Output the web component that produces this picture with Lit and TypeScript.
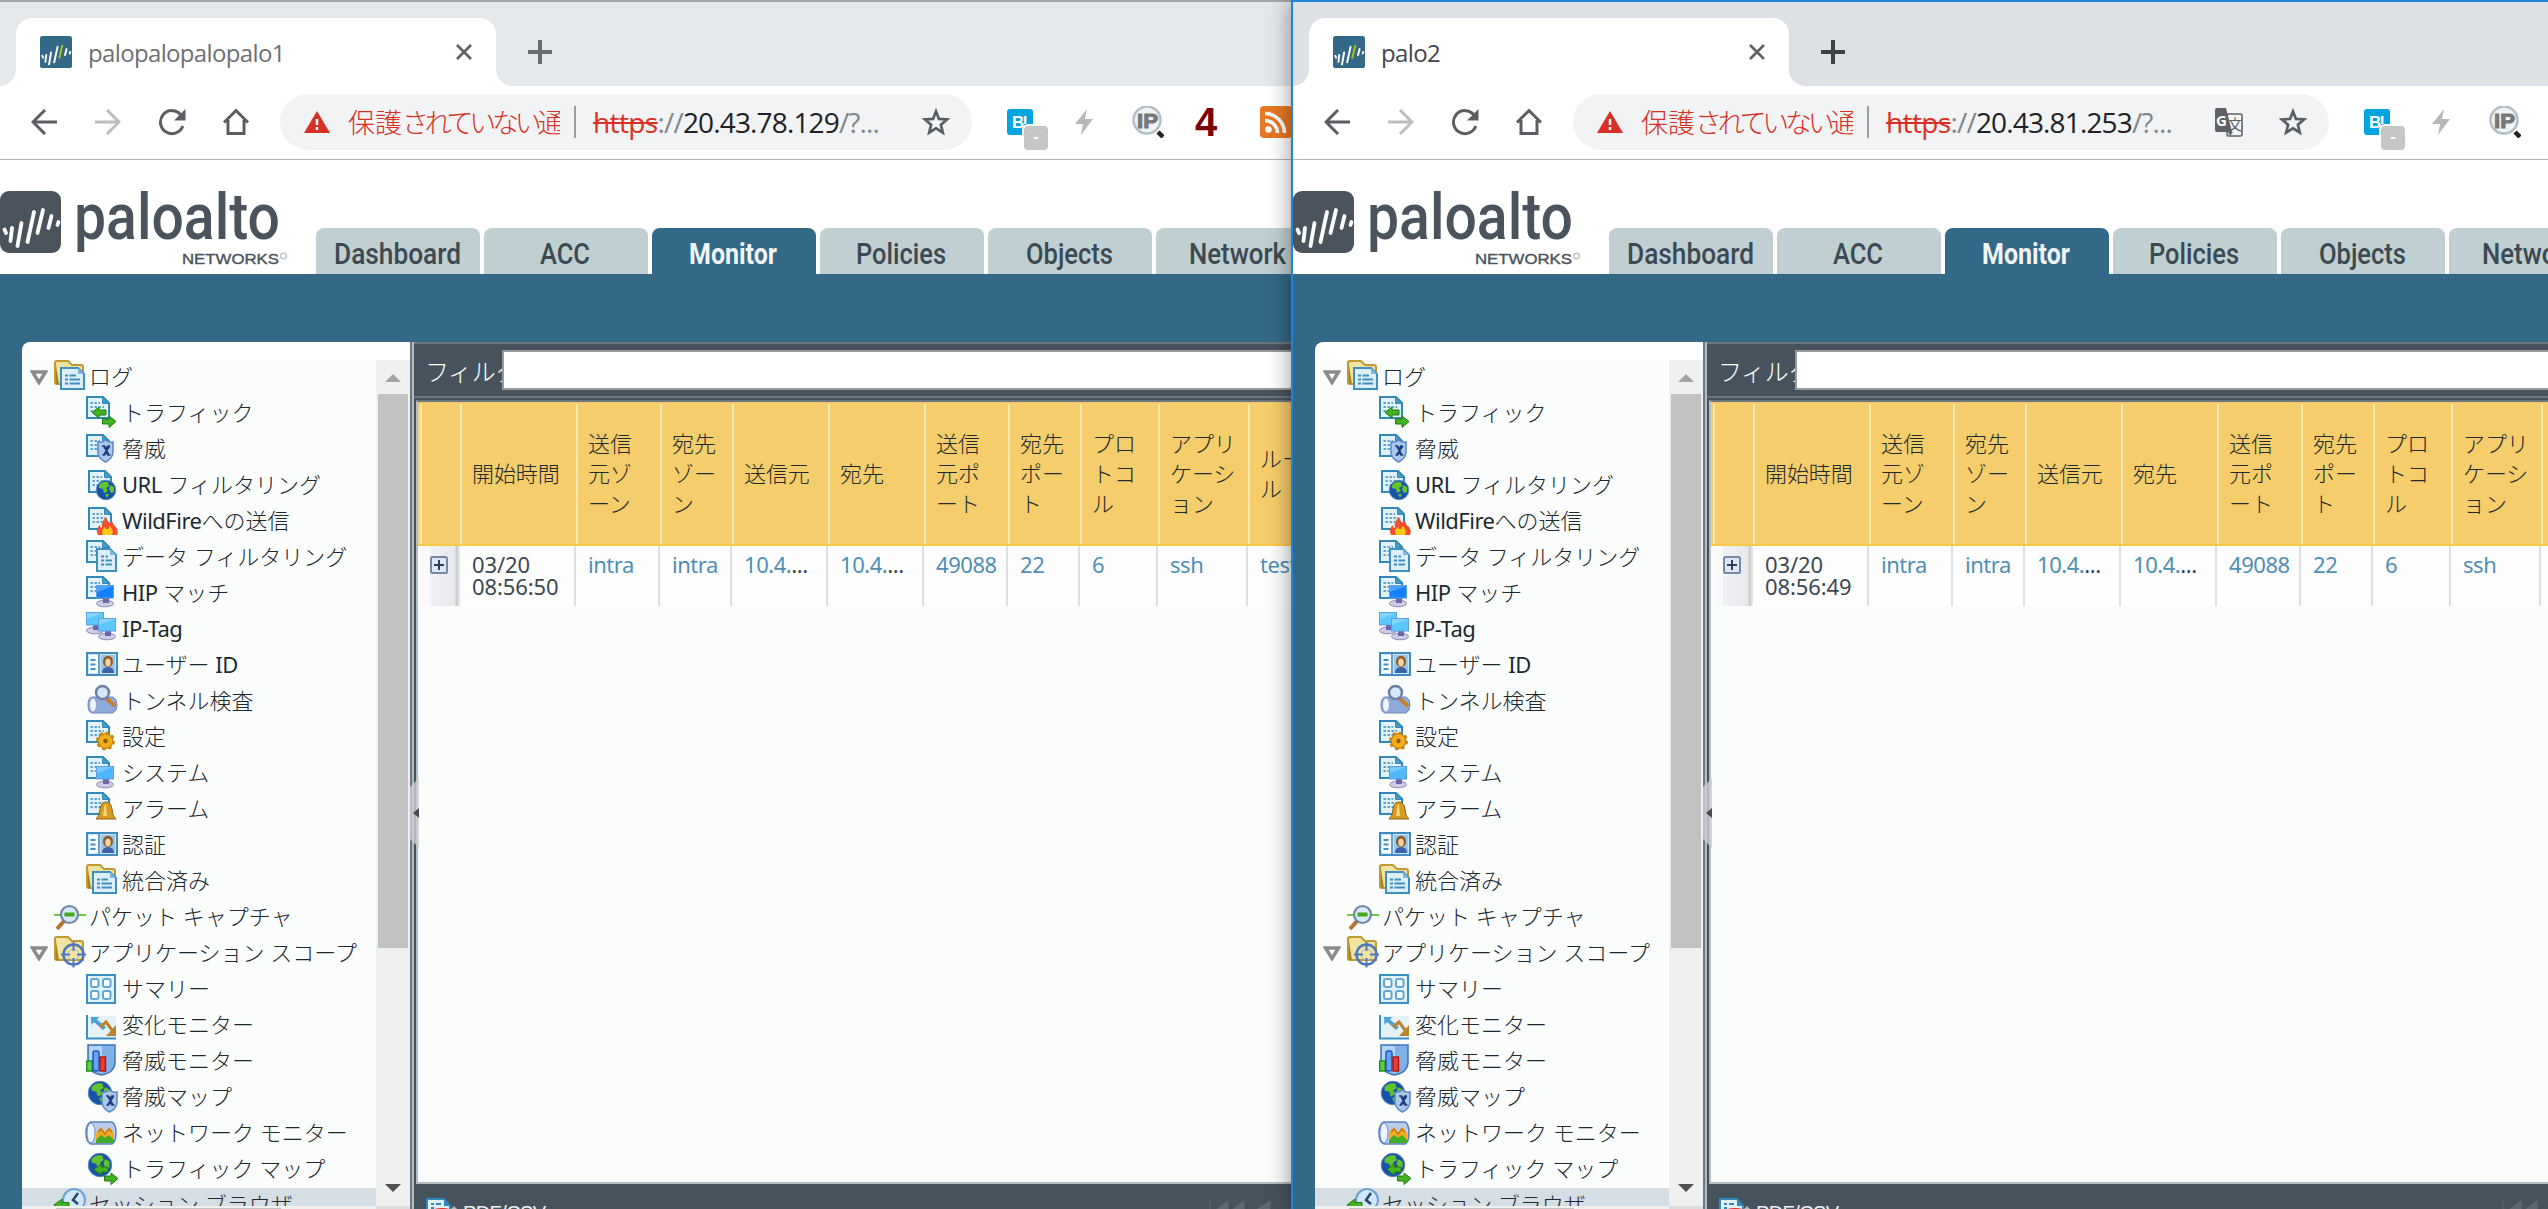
import { LitElement, html, svg, css, nothing } from "lit";
import { customElement, property } from "lit/decorators.js";

/* ---------- icon fragments, all on a 32 unit grid ---------- */

const doc = (x = 0, y = 0) => svg`<g transform="translate(${x} ${y})">
  <path d="M1 1H17L23 7V22H1Z" fill="#e3f1f9" stroke="#3388ba" stroke-width="2"/>
  <path d="M16.5 1V7.5H23Z" fill="#4d9cc8" stroke="#3388ba" stroke-width="1"/>
  <path d="M4.5 7H14M4.5 11H18M4.5 15H18" stroke="#5ba3cb" stroke-width="1.8" stroke-dasharray="2.4 1.6"/></g>`;

const sheet = (x: number, y: number, w: number, h: number) => svg`<g transform="translate(${x} ${y})">
  <path d="M1 1H${w - 7}L${w - 1} 7V${h - 1}H1Z" fill="#dceefa" stroke="#3f8fc0" stroke-width="2"/>
  <path d="M${w - 7} 1V7H${w - 1}Z" fill="#7db8dc"/>
  <path d="M5 8.500h3M5 12.500h3M5 16.500h3M9.500 8.500H${w - 9}M9.500 12.500H${w - 5}M9.500 16.500H${w - 5}" stroke="#3f8fc0" stroke-width="1.8"/></g>`;

const folder = svg`<path d="M1 3Q1 1 3 1H14L18 5H27Q29 5 29 7V24H3Q1 24 1 22Z" fill="#f1e3a0" stroke="#bd9a33" stroke-width="2"/>
  <path d="M2 5L5 24H2Z" fill="#a98427"/>`;

const globe = (x: number, y: number, r: number) => svg`<g transform="translate(${x} ${y}) scale(${r / 10})">
  <circle r="9.800" fill="#1552a8" stroke="#5c86bd" stroke-width=".8"/>
  <path d="M-7-5Q-4-9 2-8L3-4L0-2L2 1L-2 3L-3-1L-7-2ZM4-5L8-3L8 2L5 3L3-1ZM-1 4L3 4L1 8Z" fill="#64c32d"/></g>`;

const arrows = (x: number, y: number) => svg`<g transform="translate(${x} ${y})" fill="#41b324" stroke="#24790f" stroke-width="1">
  <path d="M0 5.500L7 0V3H14V8H7V11Z"/><path d="M24 14.500L17 9V12H10.500V17H17V20.500Z"/></g>`;

const shield = (x: number, y: number) => svg`<g transform="translate(${x} ${y})">
  <path d="M1 2Q5 3 8.500 0Q12 3 16 2V13Q15 19 8.500 22Q2 19 1 13Z" fill="#a9c8ec" stroke="#5c86c4" stroke-width="1.500"/>
  <path d="M5 6h2.500l1.500 3 2-3h2M5.500 15h2l1.500-3 2 3h2.500M7 6.500L12 15M12.500 6.500L6.500 15" fill="none" stroke="#1c3f80" stroke-width="1.700"/></g>`;

const monitor = (x: number, y: number, c: string) => svg`<g transform="translate(${x} ${y})">
  <ellipse cx="9" cy="18.500" rx="8.500" ry="3.300" fill="#cfcde6" stroke="#8b87b6" stroke-width="1"/>
  <path d="M7 12h6v6H7z" fill="#6d66ad"/>
  <rect x=".5" y=".5" width="17" height="12.500" fill="${c}" stroke="#5d9fe0"/>
  <path d="M1 1H17L1 7Z" fill="#fff" opacity=".25"/></g>`;

const card = svg`<rect x="1" y="5" width="30" height="22" fill="#cfe4f3" stroke="#3e8cc2" stroke-width="2"/>
  <rect x="3" y="7" width="9" height="18" fill="#f7fbfe"/><path d="M13 6V26" stroke="#3e8cc2" stroke-width="1.500"/>
  <path d="M4.500 12h5M4.500 16.500h5M4.500 21h5" stroke="#4490c4" stroke-width="2"/>
  <rect x="15" y="7" width="14" height="18" fill="#9cc6e3"/>
  <path d="M16 25Q16 19 22 19T28 25Z" fill="#3c62ad"/><ellipse cx="22" cy="13.500" rx="5" ry="5.800" fill="#8b5a25"/>
  <ellipse cx="22" cy="14.500" rx="2.700" ry="4" fill="#f5d3a8"/>`;

const ICONS: Record<string, unknown> = {
  log: svg`${folder}${sheet(6, 7, 25, 23)}`,
  traffic: svg`${doc()}${arrows(6, 11)}`,
  threat: svg`${doc(0, 2)}${shield(11, 8)}`,
  url: svg`${doc(2, 2)}${globe(20, 22, 10)}`,
  wildfire: svg`${doc(2, 3)}<path d="M12 31Q9 25 14 21Q14 24 16 24Q15 18 20 13Q21 17 24 19L26 17Q27 21 30 23Q33 27 31 31Z" fill="#f0502c"/>
    <path d="M17 31Q14 27 19 23Q20 26 22 25L24 22Q28 27 26 31Z" fill="#ffc914"/>`,
  data: svg`${doc()}${sheet(10, 8, 21, 24)}`,
  hip: svg`${doc()}${monitor(10, 9, "#1280ff")}`,
  iptag: svg`${monitor(0, 0, "#5cc8ff")}${monitor(12, 6, "#5cc8ff")}`,
  card,
  tunnel: svg`<path d="M6 13H27Q31 15 31 21T27 29H6Q2 28 2 21T6 13Z" fill="#8eaadb" stroke="#6d89bd"/>
    <ellipse cx="7" cy="21" rx="3.500" ry="7" fill="#f0f5fc" stroke="#8ba4cf"/>
    <path d="M20 14L29 22" stroke="#c77d2f" stroke-width="4"/><circle cx="16.500" cy="8.500" r="6.500" fill="#d4e8f5" stroke="#6c7fa6" stroke-width="2.500"/>`,
  config: svg`${doc()}<circle cx="19.500" cy="21" r="7.500" fill="#f3ae1b" stroke="#a66e0c"/>
    <circle cx="19.500" cy="21" r="8" fill="none" stroke="#c9860f" stroke-width="3" stroke-dasharray="3.200 3.080"/><circle cx="19.500" cy="21" r="2.200" fill="#8a5a08"/>`,
  system: svg`${doc()}${monitor(10, 10, "#4fb8fb")}`,
  alarm: svg`${doc()}<path d="M10 27Q14 24 14 17Q15 10 20 10T26 17Q26 24 30 27Z" fill="#d99a20" stroke="#8e6212"/>
    <path d="M17 24Q18 19 18 15Q19 12 20 12L21 24Z" fill="#f7d777"/>`,
  packet: svg`<path d="M0 15H32" stroke="#6bc648" stroke-width="2"/><path d="M3 29L10 21" stroke="#b5742b" stroke-width="4"/>
    <circle cx="15.500" cy="14.500" r="8.500" fill="#d6e9f5" stroke="#7284a8" stroke-width="2.200"/><path d="M10.500 14.500H20.500" stroke="#46a81f" stroke-width="4"/>`,
  scope: svg`${folder}<g fill="none" stroke="#4e78bd"><circle cx="19.500" cy="18.500" r="10" stroke-width="2.500"/><circle cx="19.500" cy="18.500" r="5.500" stroke="#9db7dd" stroke-width="1"/>
    <path d="M19.500 6V15M19.500 22V31.500M7 18.500H16M23 18.500H32" stroke-width="2"/></g>`,
  summary: svg`<rect x="1" y="3" width="28" height="28" fill="#dff0f9" stroke="#3b8fc4" stroke-width="2"/>
    <g fill="#fff" stroke="#62a7d2" stroke-width="2"><rect x="5" y="7" width="7.500" height="8" rx="2"/><rect x="17" y="7" width="7.500" height="8" rx="2"/><rect x="5" y="19" width="7.500" height="8" rx="2"/><rect x="17" y="19" width="7.500" height="8" rx="2"/></g>`,
  change: svg`<rect x="1" y="8" width="29" height="23" fill="#e4f1f9"/><path d="M1 7V30.500H30" fill="none" stroke="#3b8fc4" stroke-width="2"/>
    <path d="M5 9H13L11 11.500L20 19L17 22L8 14L5.500 17Z" fill="#4aa0d8"/>
    <path d="M14 19L20 14L26 22" fill="none" stroke="#bb842c" stroke-width="3"/><path d="M30 17V28H20Z" fill="#bb842c"/>`,
  tmon: svg`<path d="M2 1H29V19Q28 29 15.500 31Q3 29 2 19Z" fill="#7fb1e6" stroke="#3f74b8" stroke-width="1.500"/><path d="M3 2H16V29Q4 27 3 19Z" fill="#b5d3f2"/>
    <rect x=".7" y="17" width="5.500" height="10" fill="#5fd04a" stroke="#208a1c" stroke-width="1.400"/><rect x="7" y="7" width="6" height="20" rx="2" fill="#63a5f5" stroke="#1d53b8" stroke-width="1.400"/><rect x="14" y="13" width="5.500" height="14" fill="#ef3b34" stroke="#ab1410" stroke-width="1.400"/>`,
  tmap: svg`${globe(14, 13, 12)}${shield(15, 10)}`,
  netmon: svg`<path d="M5 6H26Q30 8 30 17T26 28H5Q0 26 0 17T5 6Z" fill="#b9cdea" stroke="#5a7fb8" stroke-width="1.500"/><ellipse cx="5" cy="17" rx="4" ry="10" fill="#edf4fc" stroke="#6d8ec2"/>
    <path d="M10 25V17L15 11L19 16L23 11L28 17V25Z" fill="#f6a723"/><path d="M12 16L15 13L19 18L23 13L26 16" fill="none" stroke="#b9720c" stroke-width="1.200"/><path d="M10 27V24L15 19L19 22L23 19L28 24V27Z" fill="#3fae26"/>`,
  trmap: svg`${globe(14, 13, 12)}${arrows(8, 12)}`,
  session: svg`<circle cx="20" cy="12" r="11" fill="#cfe7f8" stroke="#6aa2d4" stroke-width="2"/><path d="M24 5L19 12L24 16" fill="none" stroke="#26466b" stroke-width="2.500"/>
    <path d="M0 17L8 11V14.500H15V20H8V24Z" fill="#41b324" stroke="#24790f"/>`,
  export: svg`<path d="M1 1H18L24 8V24H1Z" fill="#e3f1f9" stroke="#3388ba" stroke-width="2"/><path d="M18 1V8H24Z" fill="#3388ba"/><path d="M5 6h3M10 6h5M5 10h3" stroke="#3388ba" stroke-width="2"/>
    <path d="M8 11Q16 9 24 11V20H8Z" fill="#d9302c"/><path d="M28 8L33 13H23Z" fill="#b9b9b9"/>`,
};

const icon = (name: string) => html`<svg class="ico" viewBox="0 0 32 32" overflow="visible">${ICONS[name]}</svg>`;

const bars = (lime: string) => svg`<g fill="none" stroke="#fff" stroke-width="3.800" stroke-linecap="round">
  <path d="M4.500 38.500L6 42"/><path d="M12 37L10.500 50"/><path d="M21.500 32L17.500 55"/><path d="M34 21L27.500 51"/>
  <path d="M43 19L37.500 42" stroke="${lime}"/><path d="M51.500 25L48.500 37"/><path d="M58.500 31L57.500 34"/></g>`;

/** A line of text set to an exact width inside its own box. */
const fitted = (label: string, w: number, h: number, baseline: number, cls: string) =>
  html`<svg class=${cls} width=${w} height=${h} viewBox="0 0 ${w} ${h}" overflow="visible"><text x="-1" y=${baseline} textLength=${w} lengthAdjust="spacingAndGlyphs">${label}</text></svg>`;

/** Latin runs carry a heavier weight than the light kana and kanji around them. */
const mixed = (label: string) =>
  label.split(/([A-Za-z-]+)/).filter(Boolean).map((part) => (/^[A-Za-z-]+$/.test(part) ? html`<b>${part}</b>` : part));

const TREE: Array<[number, string, string]> = [
  [0, "log", "ログ"], [1, "traffic", "トラフィック"], [1, "threat", "脅威"], [1, "url", "URL フィルタリング"],
  [1, "wildfire", "WildFireへの送信"], [1, "data", "データ フィルタリング"], [1, "hip", "HIP マッチ"], [1, "iptag", "IP-Tag"],
  [1, "card", "ユーザー ID"], [1, "tunnel", "トンネル検査"], [1, "config", "設定"], [1, "system", "システム"],
  [1, "alarm", "アラーム"], [1, "card", "認証"], [1, "log", "統合済み"], [2, "packet", "パケット キャプチャ"],
  [0, "scope", "アプリケーション スコープ"], [1, "summary", "サマリー"], [1, "change", "変化モニター"], [1, "tmon", "脅威モニター"],
  [1, "tmap", "脅威マップ"], [1, "netmon", "ネットワーク モニター"], [1, "trmap", "トラフィック マップ"], [2, "session", "セッション ブラウザ"],
];

const NAV: Array<[string, number]> = [["Dashboard", 127], ["ACC", 50], ["Monitor", 88], ["Policies", 90], ["Objects", 87], ["Network", 97], ["Device", 80]];

const HEADS: string[][] = [[], ["開始時間"], ["送信", "元ゾ", "ーン"], ["宛先", "ゾー", "ン"], ["送信元"], ["宛先"], ["送信", "元ポ", "ート"],
  ["宛先", "ポー", "ト"], ["プロ", "トコ", "ル"], ["アプリ", "ケーシ", "ョン"], ["ルー", "ル"]];

@customElement("browser-window")
export class BrowserWindow extends LitElement {
  @property() heading = "";
  @property() host = "";
  @property() time = "";
  @property({ type: Boolean }) translate2 = false;
  @property({ type: Boolean, reflect: true }) active = false;

  static styles = css`
    :host { display: flex; flex-direction: column; height: 1209px; overflow: hidden; box-sizing: border-box; background: #fff;
      border-top: 2px solid #a6a6a6; min-width: 0; font-family: "Noto Sans", "Noto Sans CJK JP", sans-serif; --strip: #e4e8eb; --title: #6c7074; --plus: #696b6e; }
    :host([active]) { border-top-color: #1f83d8; border-left: 2px solid #1f83d8; --strip: #dde0e5; --title: #43474d; --plus: #3e4247; }
    * { box-sizing: border-box; }
    svg { display: block; flex: none; }
    .strip { flex: none; height: 84px; background: var(--strip); display: flex; align-items: flex-end; }
    .curve { width: 16px; height: 16px; flex: none; background: radial-gradient(circle at 0 0, transparent 15.500px, #fff 16px); }
    .curve.r { background: radial-gradient(circle at 100% 0, transparent 15.500px, #fff 16px); }
    .tab { width: 480px; height: 68px; background: #fff; border-radius: 16px 16px 0 0; display: flex; align-items: center; padding: 0 24px; }
    .title { flex: 1; margin-left: 16px; font: 24px "Open Sans", sans-serif; letter-spacing: -.65px; color: var(--title); white-space: nowrap; }
    .plus { margin: 0 0 22px 16px; }
    .bar { flex: none; height: 74px; border-bottom: 1px solid #b3b3b5; display: flex; align-items: center; padding: 0 0 1px 12px; }
    .slot { width: 64px; flex: none; display: flex; justify-content: center; position: relative; }
    .omni { width: 692px; height: 56px; flex: none; border-radius: 28px; background: #f1f3f4; margin: 0 16px 0 12px; display: flex; align-items: center; padding: 0 22px 0 24px; }
    .omni.wide { width: 756px; }
    .warn { width: 212px; margin-left: 18px; overflow: hidden; white-space: nowrap; color: #d93025; font: 300 27px "Noto Sans CJK JP", sans-serif; line-height: 40px; }
    .warn i { font-style: normal; letter-spacing: -4.300px; }
    .sep { width: 2px; height: 32px; background: #9b9ea2; margin: 0 17px 0 14px; flex: none; }
    .addr { flex: 1; white-space: nowrap; font: 28px "Open Sans", sans-serif; letter-spacing: -.850px; color: #80868b; line-height: 40px; }
    .addr s { color: #d93025; text-decoration-thickness: 2px; letter-spacing: -.6px; }
    .addr b { font-weight: 400; color: #202124; }
    .tr { margin-right: 36px; }
    .badge { position: absolute; left: 36px; top: 17px; width: 24px; height: 24px; border-radius: 4px; background: #c6c6c6; color: #fff; box-shadow: 0 0 0 2px #fff;
      font: bold 16px/22px "Liberation Sans", sans-serif; text-align: center; }
    .four { font: bold 40px/40px "Liberation Sans", sans-serif; color: #7d0000; margin-right: 12px; }
    .brand { flex: none; height: 114px; display: flex; align-items: flex-end; background: #fff; }
    .logo { margin-right: 16px; }
    .nav { display: flex; gap: 4px; }
    .nav div { width: 164px; height: 46px; flex: none; border-radius: 8px 8px 0 0; background: #c0cfd2; display: flex; justify-content: center; align-items: center; }
    .nav .on { background: #336887; }
    .nt { font: 500 30px Roboto, sans-serif; fill: #3b4a52; }
    .on .nt { font-weight: 700; fill: #f0f5f8; }
    .page { flex: 1; min-height: 0; background: #336887; padding: 68px 0 0 22px; display: flex; }
    .side { width: 388px; flex: none; background: #fff; border-radius: 8px 0 0 0; padding-top: 18px; display: flex; flex-direction: column; }
    .scroll { flex: 1; min-height: 0; display: flex; }
    .tree { width: 354px; background: #fbfdfc; overflow: hidden; }
    .row { height: 36px; display: flex; align-items: flex-start; padding-left: 8px; color: #1d282f; }
    .row.l1 { padding-left: 64px; }
    .row.l2 { padding-left: 32px; }
    .row.sel { background: #d4dee4; }
    .ico { width: 32px; height: 32px; }
    .tri { margin: 10px 6px 0 0; }
    .row span { font-size: 22px; line-height: 33px; letter-spacing: 0; margin-left: 4px; white-space: pre; font-weight: 300; }
    .row.l0 span, .row.l2 span { margin-left: 3px; }
    .row b { font-weight: 400; letter-spacing: -.5px; }
    .vbar { width: 34px; background: #f0f0f0; display: flex; flex-direction: column; align-items: center; }
    .up { margin: 14px 0 12px; }
    .thumb { width: 30px; height: 554px; background: #c1c1c1; flex: none; }
    .down { margin-top: 236px; }
    .hbar { height: 3px; background: #f0f0f0; flex: none; display: flex; justify-content: space-between; }
    .hbar p { margin: 2px 0 0 34px; width: 225px; background: #c1c1c1; }
    .hbar q { width: 34px; background: #dcdcdc; quotes: none; }
    .split { width: 4px; flex: none; background: linear-gradient(90deg, #6c7983 50%, #b4bcc2 50%); position: relative; }
    .grip { position: absolute; left: 0; top: 436px; width: 9px; height: 70px; background: #cfced4cc; clip-path: polygon(0 9px, 100% 0, 100% 100%, 0 61px); display: flex; align-items: center; justify-content: flex-end; z-index: 2; }
    .main { flex: 1; min-width: 0; background: #47535c; border-top: 2px solid #6e7780; display: flex; flex-direction: column; }
    .filter { height: 54px; flex: none; display: flex; align-items: center; padding-left: 11px; border-bottom: 2px solid #6e7780; }
    .filter span { width: 77px; overflow: hidden; white-space: nowrap; color: #fff; font-size: 24px; letter-spacing: -.4px; line-height: 38px; font-weight: 300; padding-top: 3px; }
    .filter div { flex: 1; height: 40px; background: #fff; border: 2px solid #999; border-right: 0; }
    .grid { margin: 2px 0 0 2px; flex: none; height: 784px; border: 2px solid #b4bcc2; border-top-color: #6e7780; border-right: 0; background: #fbfdfc; overflow: hidden; }
    .cols { display: grid; grid-template-columns: 40px 116px 84px 72px 96px 96px 84px 72px 78px 90px 90px; width: 918px; }
    .head { height: 144px; background: #f5cd6a; border-bottom: 2px solid #fdca47; padding: 2px 0 0 2px; width: 1200px; color: #1f2a30; font-size: 22px; line-height: 30px; letter-spacing: -.1px; font-weight: 300; }
    .head div { border-left: 2px solid #fde6b0; padding: 0 0 3px 10px; display: flex; flex-direction: column; justify-content: center; white-space: nowrap; }
    .body { height: 60px; padding-left: 2px; background: #fdfdfe; color: #3c4850; font-size: 22px; line-height: 22px; letter-spacing: -.1px; }
    .body div { border-right: 2px solid #dcdfe3; padding: 7px 0 0 12px; white-space: nowrap; }
    .body .a { color: #4e8fb3; letter-spacing: -.45px; }
    .body u { color: #3c4850; text-decoration: none; }
    .body .x { padding: 10px 0 0 10px; background: linear-gradient(90deg, #fafafa 10px, #f1f2f5 10px, #e7e8ec 35px, #c9cacf 36px, #d2d3d7 38px); border-right-color: #e3e3e6; }
    .foot { flex: 1; min-height: 0; display: flex; align-items: flex-start; padding: 14px 0 0 12px; overflow: hidden; }
    .foot span { margin: 2px 0 0 5px; color: #eef1f3; font: 20px/26px "Liberation Sans", sans-serif; letter-spacing: -.6px; }
    .pager { margin: 3px 0 0 663px; opacity: .35; }
    .brandname { font: 500 64px Roboto, sans-serif; fill: #4b545c; }
    .sub { font: 15.500px "Liberation Sans", sans-serif; fill: #4b545c; stroke: #4b545c; stroke-width: .4px; }
    .bl { font: 900 17px "Liberation Sans", sans-serif; fill: #fff; }
    .ip { font: 900 20px "Liberation Sans", sans-serif; fill: #777; stroke: #777; }
    .g { font: 700 15px "Open Sans", sans-serif; fill: #fff; }
    .zh { font: 15px "Noto Sans CJK JP", sans-serif; fill: #5f6368; }
  `;

  private chrome() {
    return html`
      <div class="strip">
        <div class="curve"></div>
        <div class="tab">
          <svg width="32" height="32" viewBox="0 0 62 62"><rect width="62" height="62" rx="5" fill="#336887"/>${bars("#a5c61c")}</svg>
          <div class="title">${this.heading}</div>
          <svg width="16" height="16" viewBox="0 0 16 16"><path d="M1 1L15 15M15 1L1 15" stroke="#5f6368" stroke-width="2.800"/></svg>
        </div>
        <div class="curve r"></div>
        <svg class="plus" width="24" height="24" viewBox="0 0 24 24"><path d="M12 0V24M0 12H24" stroke="var(--plus)" stroke-width="4"/></svg>
      </div>
      <div class="bar">
        <div class="slot"><svg width="26" height="26" viewBox="0 0 26 26"><path d="M26 13H2M14 1L2 13L14 25" fill="none" stroke="#5a5e63" stroke-width="3"/></svg></div>
        <div class="slot"><svg width="26" height="26" viewBox="0 0 26 26"><path d="M0 13H24M12 1L24 13L12 25" fill="none" stroke="#bcbec0" stroke-width="3"/></svg></div>
        <div class="slot"><svg width="28" height="28" viewBox="0 0 28 28"><path d="M23 7A11.500 11.500 0 1 0 24.800 18" fill="none" stroke="#5a5e63" stroke-width="3"/><path d="M27.500 1V12.500H16Z" fill="#5a5e63"/></svg></div>
        <div class="slot"><svg width="28" height="28" viewBox="0 0 28 28"><path d="M2 14.500L14 2.500L26 14.500M6 12V25.500H22V12" fill="none" stroke="#5a5e63" stroke-width="3"/></svg></div>
        <div class="omni ${this.translate2 ? "wide" : ""}">
          <svg width="26" height="22" viewBox="0 0 26 22"><path d="M13 0L26 22H0Z" fill="#d93025"/><path d="M13 8V14M13 16V19" stroke="#fff" stroke-width="2.500"/></svg>
          <div class="warn">保護<i>されていない</i>通信</div>
          <div class="sep"></div>
          <div class="addr"><s>https</s>://<b>${this.host}</b>/?...</div>
          ${this.translate2
            ? html`<svg class="tr" width="28" height="29" viewBox="0 0 28 29"><rect x="12" y="6" width="15" height="22" rx="1.500" fill="#f1f3f4" stroke="#5f6368" stroke-width="1.600"/>
                <text class="zh" x="12.500" y="22">文</text><path d="M2 0H11L17 24H2Q0 24 0 22V2Q0 0 2 0Z" fill="#5f6368"/><path d="M13 24H18L15 28Z" fill="#5f6368"/><text class="g" x="1" y="18">G</text></svg>`
            : nothing}
          <svg width="28" height="28" viewBox="0 0 28 28"><path d="M14 3.500L17 10.900L25 11.500L18.900 16.700L20.800 24.500L14 20.300L7.200 24.500L9.100 16.700L3 11.500L11 10.900Z" fill="none" stroke="#5a5e63" stroke-width="2.700"/></svg>
        </div>
        <div class="slot"><svg width="26" height="26" viewBox="0 0 26 26"><rect width="26" height="26" rx="3" fill="#00a4de"/><text class="bl" x="5" y="19" textLength="16">B!</text></svg><div class="badge">-</div></div>
        <div class="slot"><svg width="18" height="26" viewBox="0 0 18 26"><path d="M12 0L0 15H8L6 26L18 10H10Z" fill="#b7b7b7"/></svg></div>
        <div class="slot"><svg width="32" height="32" viewBox="0 0 32 32"><circle cx="15" cy="14" r="13.500" fill="#eef3f6" stroke="#b3bec6" stroke-width="2.500"/><path d="M26 26L31 31" stroke="#222" stroke-width="4.500"/><text class="ip" x="5" y="21.500" textLength="21" lengthAdjust="spacingAndGlyphs">IP</text></svg></div>
        <div class="slot"><span class="four">4</span></div>
        <div class="slot"><svg width="32" height="32" viewBox="0 0 32 32"><rect width="32" height="32" rx="4" fill="#e77824"/><circle cx="8.500" cy="23.500" r="3.300" fill="#fff"/><path d="M5 14.500A12.500 12.500 0 0 1 17.500 27M5 7.500A19.500 19.500 0 0 1 24.500 27" fill="none" stroke="#fff" stroke-width="3.600"/></svg></div>
      </div>`;
  }

  private tree() {
    return html`<div class="side">
      <div class="scroll">
        <div class="tree">
          ${TREE.map(([lvl, ic, label], i) => html`<div class="row l${lvl} ${i === TREE.length - 1 ? "sel" : ""}">
            ${lvl === 0 ? html`<svg class="tri" width="18" height="16" viewBox="0 0 18 16"><path d="M2.500 2H15.500L9 12.500Z" fill="#fff" stroke="#8b8b8b" stroke-width="3.400"/></svg>` : nothing}
            ${icon(ic)}<span>${mixed(label)}</span></div>`)}
        </div>
        <div class="vbar">
          <svg class="up" width="16" height="8" viewBox="0 0 16 8"><path d="M8 0L16 8H0Z" fill="#a3a3a3"/></svg>
          <div class="thumb"></div>
          <svg class="down" width="16" height="8" viewBox="0 0 16 8"><path d="M0 0H16L8 8Z" fill="#505050"/></svg>
        </div>
      </div>
      <div class="hbar"><p></p><q></q></div>
    </div>`;
  }

  render() {
    const cells = ["intra", "intra", "10.4.", "10.4.", "49088", "22", "6", "ssh", "test"];
    return html`
      ${this.chrome()}
      <div class="brand">
        <svg class="logo" width="300" height="83" viewBox="0 0 300 83"><rect width="61" height="62" rx="9" fill="#4b545c"/>${bars("#fff")}
          <text class="brandname" x="74" y="48" textLength="206" lengthAdjust="spacingAndGlyphs">paloalto</text>
          <text class="sub" x="182" y="72.500" textLength="97" lengthAdjust="spacingAndGlyphs">NETWORKS</text>
          <circle cx="283.500" cy="65" r="3" fill="none" stroke="#aaa" stroke-width="1"/></svg>
        <div class="nav">${NAV.map(([n, w]) => html`<div class=${n === "Monitor" ? "on" : ""}>${fitted(n, w, 30, 28, "nt")}</div>`)}</div>
      </div>
      <div class="page">
        ${this.tree()}
        <div class="split"><div class="grip"><svg width="6" height="10" viewBox="0 0 6 10"><path d="M6 0V10L0 5Z" fill="#4a4a50"/></svg></div></div>
        <div class="main">
          <div class="filter"><span>フィルタ</span><div></div></div>
          <div class="grid">
            <div class="cols head">${HEADS.map((h) => html`<div>${h.map((l) => html`<span>${l}</span>`)}</div>`)}</div>
            <div class="cols body">
              <div class="x"><svg width="18" height="18" viewBox="0 0 18 18"><rect x="1" y="1" width="16" height="16" rx="1.500" fill="#dde6f4" stroke="#7688a8" stroke-width="2"/><path d="M9 4V14M4 9H14" stroke="#2c3f60" stroke-width="2"/></svg></div>
              <div>03/20<br />${this.time}</div>
              ${cells.map((c) => html`<div class="a">${c}${c === "10.4." ? html`<u>...</u>` : nothing}</div>`)}
            </div>
          </div>
          <div class="foot">${icon("export")}<span>PDF/CSV</span>
            <svg class="pager" width="120" height="20" viewBox="0 0 120 20"><path d="M2 0V18M20 0L8 9L20 18ZM36 0L24 9L36 18ZM62 0L48 9L62 18Z" fill="#8d949b" stroke="#8d949b"/></svg></div>
        </div>
      </div>`;
  }
}

@customElement("app-root")
export class AppRoot extends LitElement {
  static styles = css`
    :host { display: grid; grid-template-columns: 1291px 1fr; width: 2548px; height: 1209px; overflow: hidden; }
    .front { box-shadow: 0 0 22px rgba(0, 0, 0, .42); z-index: 1; }
  `;
  render() {
    return html`<browser-window heading="palopalopalopalo1" host="20.43.78.129" time="08:56:50"></browser-window>
      <browser-window class="front" active translate2 heading="palo2" host="20.43.81.253" time="08:56:49"></browser-window>`;
  }
}
